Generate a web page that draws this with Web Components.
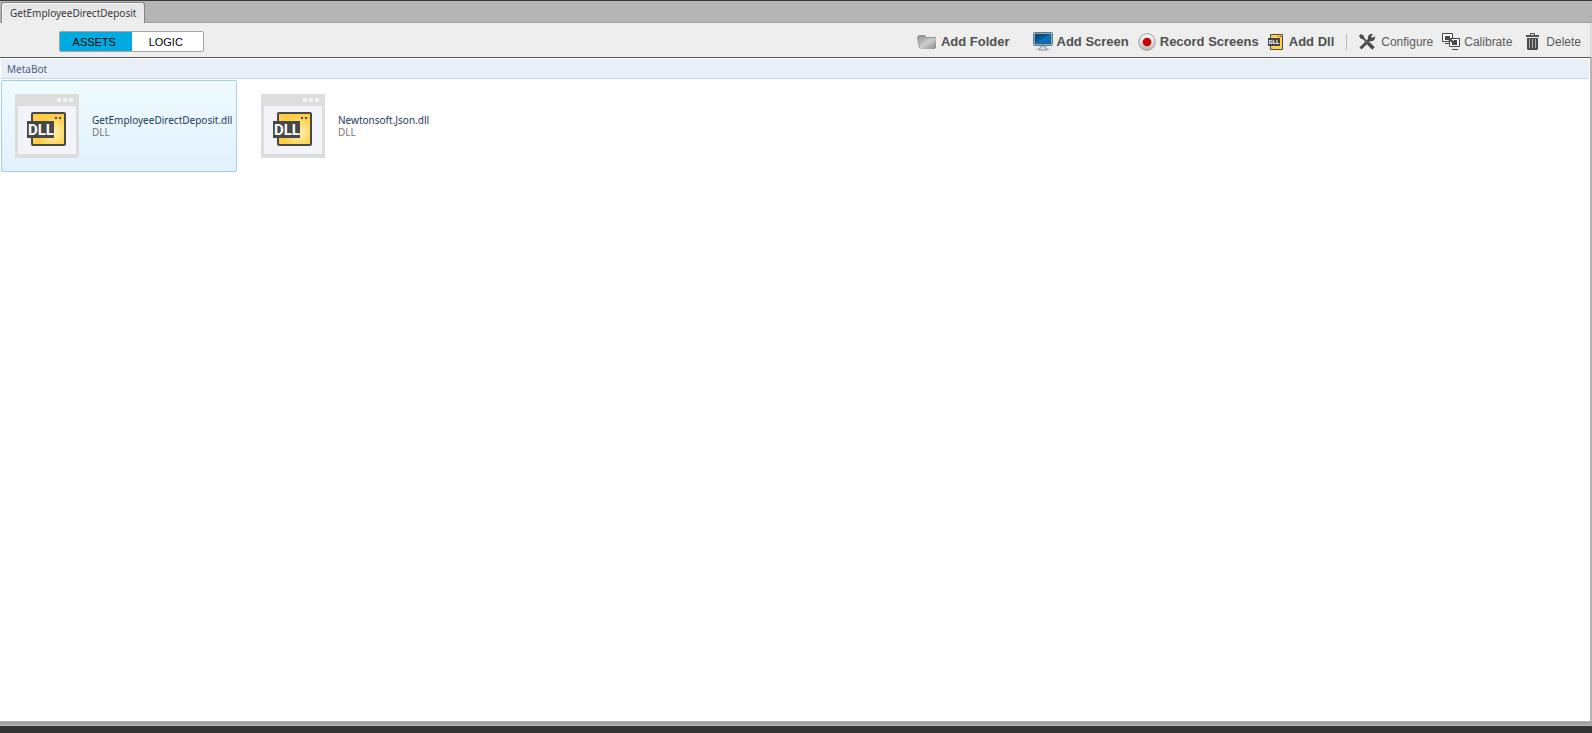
<!DOCTYPE html>
<html lang="en">
<head>
<meta charset="utf-8">
<title>GetEmployeeDirectDeposit</title>
<style>
html, body { height: 100%; margin: 0; }
body { display: flex; flex-direction: column; background: #333; font: 10px/14px "Noto Sans", "Liberation Sans", sans-serif; }
</style>
</head>
<body>
<metabot-window></metabot-window>

<template id="window-tpl">
<style>
:host { flex: 1; display: flex; flex-direction: column; min-height: 0; border-top: 1px solid #3a3a3a; border-bottom: 7px solid #333; box-sizing: border-box; }
main { flex: 1; display: flex; flex-direction: column; background: #fff; border-right: 2px solid #b4b4b4; padding: 0 1px; }
.list { display: flex; flex-wrap: wrap; gap: 10px; padding-top: 1px; }
footer { height: 5px; background: linear-gradient(#b4b4b4 0 1px, #989898 1px 2px, #b0b0b0 2px 3px, #a0a0a0 3px 4px, #b8b8b8 4px 5px); }
</style>
<tab-strip>GetEmployeeDirectDeposit</tab-strip>
<tool-bar></tool-bar>
<main>
  <path-bar>MetaBot</path-bar>
  <div class="list">
    <asset-tile selected><span slot="name">GetEmployeeDirectDeposit.dll</span>DLL</asset-tile>
    <asset-tile><span slot="name">Newtonsoft.Json.dll</span>DLL</asset-tile>
  </div>
</main>
<footer></footer>
</template>

<template id="tabs-tpl">
<style>
:host { display: flex; height: 22px; padding: 1px 1px 0; box-sizing: border-box; background: #b5b5b5; border-bottom: 1px solid #a3a3a3; }
button { height: 21px; margin: 0; padding: 0 8px; border: 1px solid #858585; border-bottom: 0; border-radius: 3px 3px 0 0; background: linear-gradient(#e4e4e4, #eee); box-shadow: inset 1px 1px #f8f8f8; color: #3b3742; font: inherit; }
</style>
<button type="button"><slot></slot></button>
</template>

<template id="bar-tpl">
<style>
:host { display: flex; align-items: center; height: 35px; box-sizing: border-box; padding: 3px 9px 0 59px; background: #eee; border-right: 2px solid #ddd; border-bottom: 1px solid #585858; }
.seg { display: flex; width: 145px; height: 21px; box-sizing: border-box; border: 1px solid #a3a3a3; border-radius: 2px; background: #fff; }
.seg button { flex: 1; border: 0; margin: 0; padding: 0 3px 0 0; background: none; color: #000; font: 11px/14px "Liberation Sans", sans-serif; }
.seg .on { background: #00abe1; }
nav { display: flex; align-items: center; margin-left: auto; gap: 9px; }
.first { margin-right: 14px; }
.sep { width: 1px; height: 16px; background: #bbb; margin: 0 3px; }
</style>
<div class="seg"><button type="button" class="on">ASSETS</button><button type="button">LOGIC</button></div>
<nav>
<tool-button class="first" strong>
<svg slot="icon" width="20" height="16" viewBox="0 0 20 16"><defs><linearGradient id="f" x2="1" y2="1"><stop stop-color="#999"/><stop offset=".5" stop-color="#ccc"/><stop offset="1" stop-color="#888"/></linearGradient></defs><path d="M0 3 2 1h6l1 2h10v11H2z" fill="#939393"/><path d="M1 3h6l1 1h11l-1 11H3z" fill="url(#f)"/></svg>Add Folder</tool-button>
<tool-button strong>
<svg slot="icon" width="20" height="19" viewBox="0 0 20 19"><defs><linearGradient id="s" x2="1" y2="1"><stop stop-color="#063f70"/><stop offset=".45" stop-color="#075a9b"/><stop offset=".5" stop-color="#1273b8"/><stop offset="1" stop-color="#086ab5"/></linearGradient></defs><ellipse cx="10" cy="17.5" rx="8" ry="1" fill="#ccc"/><rect x=".5" y=".5" width="19" height="13" rx="1" fill="#b8cbd5" stroke="#607987"/><rect x="2" y="2" width="16" height="10" fill="url(#s)" stroke="#164769" stroke-width=".5"/><path d="M8 14h4v2h2v2H6v-2h2z" fill="#d9e1e5" stroke="#6c7d86" stroke-width=".7"/></svg>Add Screen</tool-button>
<tool-button strong>
<svg slot="icon" width="18" height="18" viewBox="0 0 18 18"><defs><linearGradient id="r" x2="0" y2="1"><stop stop-color="#fff"/><stop offset="1" stop-color="#bbb"/></linearGradient></defs><circle cx="9" cy="9" r="8.3" fill="url(#r)" stroke="#999"/><circle cx="9" cy="9" r="4.3" fill="#c00"/></svg>Record Screens</tool-button>
<tool-button strong wide>
<svg slot="icon" width="15" height="16" viewBox="0 0 15 16"><path d="M2.5.5h12v15h-12z" fill="#ffd04d" stroke="#4a4a4a"/><path d="M10 2h1v1h-1zm2 0h1v1h-1zM0 4h12v8H0z" fill="#444"/><text x="6" y="10" text-anchor="middle" fill="#fff" font-family="Roboto, sans-serif" font-weight="700" font-size="6">DLL</text></svg>Add Dll</tool-button>
<span class="sep"></span>
<tool-button wide>
<svg slot="icon" width="16" height="16" viewBox="0 0 16 16"><path d="m2 2 5 5" stroke="#4b4b4b" stroke-width="2"/><path d="m9 9 5.500 5.500" stroke="#4b4b4b" stroke-width="3.500"/><path d="m1.500 14.500 9.500-9.500" stroke="#4b4b4b" stroke-width="3"/><path d="M14 0a4 4 0 0 0-5 5l2 2a4 4 0 0 0 5-5l-2.500 2-1.500-1.500zM0 2l2-2 3 2v2L4 5H2z" fill="#4b4b4b"/></svg>Configure</tool-button>
<tool-button>
<svg slot="icon" width="18" height="17" viewBox="0 0 18 17"><path d="M.5.5h10v8H.5zM3 10.500h5" fill="#fff" stroke="#444"/><path d="M7.500 5.500h10v8h-10zM10 16.500h6" fill="#fff" stroke="#444"/><path d="M3 3h5v2l2 2 2 1V7h3v5h-5v-2L8 8 6 7H3z" fill="#4b4b4b"/></svg>Calibrate</tool-button>
<tool-button wide class="del">
<svg slot="icon" width="14" height="17" viewBox="0 0 14 17"><path d="M4 2V0h5v2h4v2H0V2zM5 1v1h3V1z" fill="#555" fill-rule="evenodd"/><path d="M1 5h11v11l-1 1H2l-1-1z" fill="#4b4b4b"/><path d="M3.500 6v9M6.500 6v9M9.500 6v9" stroke="#aaa"/></svg>Delete</tool-button>
</nav>
</template>

<template id="button-tpl">
<style>
:host { display: block; }
button { display: flex; align-items: center; gap: 4px; border: 0; margin: 0; padding: 0; background: none; color: #5a5a5a; font: 12px/18px "Liberation Sans", sans-serif; white-space: nowrap; }
:host([wide]) button { gap: 6px; }
:host([strong]) button { font-weight: bold; font-size: 13px; color: #505050; }
:host(.del) { margin-left: 5px; }
</style>
<button type="button"><slot name="icon"></slot><span><slot></slot></span></button>
</template>

<template id="path-tpl">
<style>
:host { display: block; height: 21px; box-sizing: border-box; padding: 3px 6px 0; border-top: 1px solid #fff; border-bottom: 1px solid #c9d8ea; background: #e8eff7; color: #4c607f; }
</style>
<slot></slot>
</template>

<template id="tile-tpl">
<style>
:host { display: flex; align-items: center; gap: 13px; width: 236px; height: 92px; box-sizing: border-box; padding: 0 0 0 13px; border: 1px solid transparent; border-radius: 2px; }
:host([selected]) { border-color: #a5cdec; background: linear-gradient(#f0fbff, #e1f1fd); }
svg { flex: none; }
.text { display: flex; flex-direction: column; line-height: 12px; white-space: nowrap; color: #777; }
.name { color: #1e395b; }
</style>
<svg width="64" height="64" viewBox="0 0 64 64"><defs><radialGradient id="g" cx=".65" cy=".6" r=".5"><stop stop-color="#fff0b5"/><stop offset="1" stop-color="#ffce45"/></radialGradient></defs><path d="M0 0h64v64H0z" fill="#ddd"/><path d="M3 12h58v48H3zM42 4h4v4h-4zm6 0h4v4h-4zm6 0h4v4h-4z" fill="#f3f3fa"/><rect x="17" y="19" width="33" height="32" rx="1" fill="url(#g)" stroke="#484848" stroke-width="2"/><path d="M40 23h2v2h-2zm4 0h2v2h-2zM12 27h27v17H12z" fill="#484848"/><text x="26" y="41" text-anchor="middle" fill="#fff" font-family="Roboto, sans-serif" font-weight="700" font-size="15">DLL</text></svg>
<div class="text"><span class="name"><slot name="name"></slot></span><span><slot></slot></span></div>
</template>

<script>
const define = (name, id) => customElements.define(name, class extends HTMLElement {
  constructor() {
    super();
    this.attachShadow({ mode: "open" }).append(document.getElementById(id).content.cloneNode(true));
  }
});
define("tab-strip", "tabs-tpl");
define("tool-button", "button-tpl");
define("tool-bar", "bar-tpl");
define("path-bar", "path-tpl");
define("asset-tile", "tile-tpl");
define("metabot-window", "window-tpl");
</script>
</body>
</html>
